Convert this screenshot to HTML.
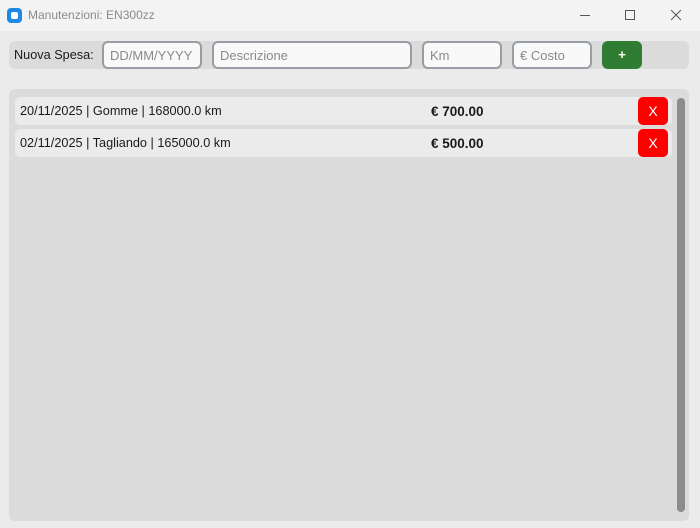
<!DOCTYPE html><html><head><style>
*{margin:0;padding:0;box-sizing:border-box}
body{width:700px;height:528px;background:#ebebeb;font-family:"Liberation Sans",sans-serif;position:relative;overflow:hidden}
.a{position:absolute}
.inp{position:absolute;top:41px;height:28px;border:2px solid #979da3;border-radius:6px;background:#f9f9fa;color:#8a8a8a;font-size:13px;padding:5px 0 0 6px}
.row{position:absolute;left:15px;width:657px;height:28px;background:#ebebeb;border-radius:5px;font-size:12.7px;color:#1a1a1a}
.row .t{position:absolute;left:5px;top:7px}
.row .p{position:absolute;left:416px;top:7px;font-weight:bold;font-size:13.5px}
.x{position:absolute;left:623px;top:0;width:30px;height:28px;background:#fe0000;border-radius:5px;color:#fff;font-size:14px;text-align:center;line-height:28px}
</style></head><body>
<div class="a" style="left:0;top:0;width:700px;height:31px;background:#f3f3f3"></div>
<div class="a" style="left:7px;top:8px;width:15px;height:15px;background:#1e88e5;border-radius:4px"><div class="a" style="left:4px;top:4px;width:7px;height:7px;background:#fff;border-radius:2px"></div></div>
<div class="a" style="left:28px;top:8px;font-size:12px;color:#8a8a8a">Manutenzioni: EN300zz</div>
<div class="a" style="left:580px;top:15px;width:10px;height:1px;background:#555"></div>
<div class="a" style="left:625px;top:10px;width:10px;height:10px;border:1px solid #555"></div>
<svg class="a" style="left:670px;top:9px" width="12" height="12"><path d="M1 1L11 11M11 1L1 11" stroke="#555" stroke-width="1"/></svg>
<div class="a" style="left:9px;top:41px;width:680px;height:28px;background:#dbdbdb;border-radius:6px"></div>
<div class="a" style="left:14px;top:48px;font-size:12.7px;color:#1a1a1a">Nuova Spesa:</div>
<div class="inp" style="left:102px;width:100px">DD/MM/YYYY</div>
<div class="inp" style="left:212px;width:200px">Descrizione</div>
<div class="inp" style="left:422px;width:80px">Km</div>
<div class="inp" style="left:512px;width:80px">€ Costo</div>
<div class="a" style="left:602px;top:41px;width:40px;height:28px;background:#2e7d32;border-radius:6px;color:#fff;font-size:13px;text-align:center;line-height:27px;font-weight:bold">+</div>
<div class="a" style="left:9px;top:89px;width:680px;height:432px;background:#dbdbdb;border-radius:6px"></div>
<div class="a" style="left:677px;top:98px;width:8px;height:414px;background:#8c8c8c;border-radius:4px"></div>
<div class="row" style="top:97px"><span class="t">20/11/2025 | Gomme | 168000.0 km</span><span class="p">€ 700.00</span><div class="x">X</div></div>
<div class="row" style="top:129px"><span class="t">02/11/2025 | Tagliando | 165000.0 km</span><span class="p">€ 500.00</span><div class="x">X</div></div>
</body></html>
